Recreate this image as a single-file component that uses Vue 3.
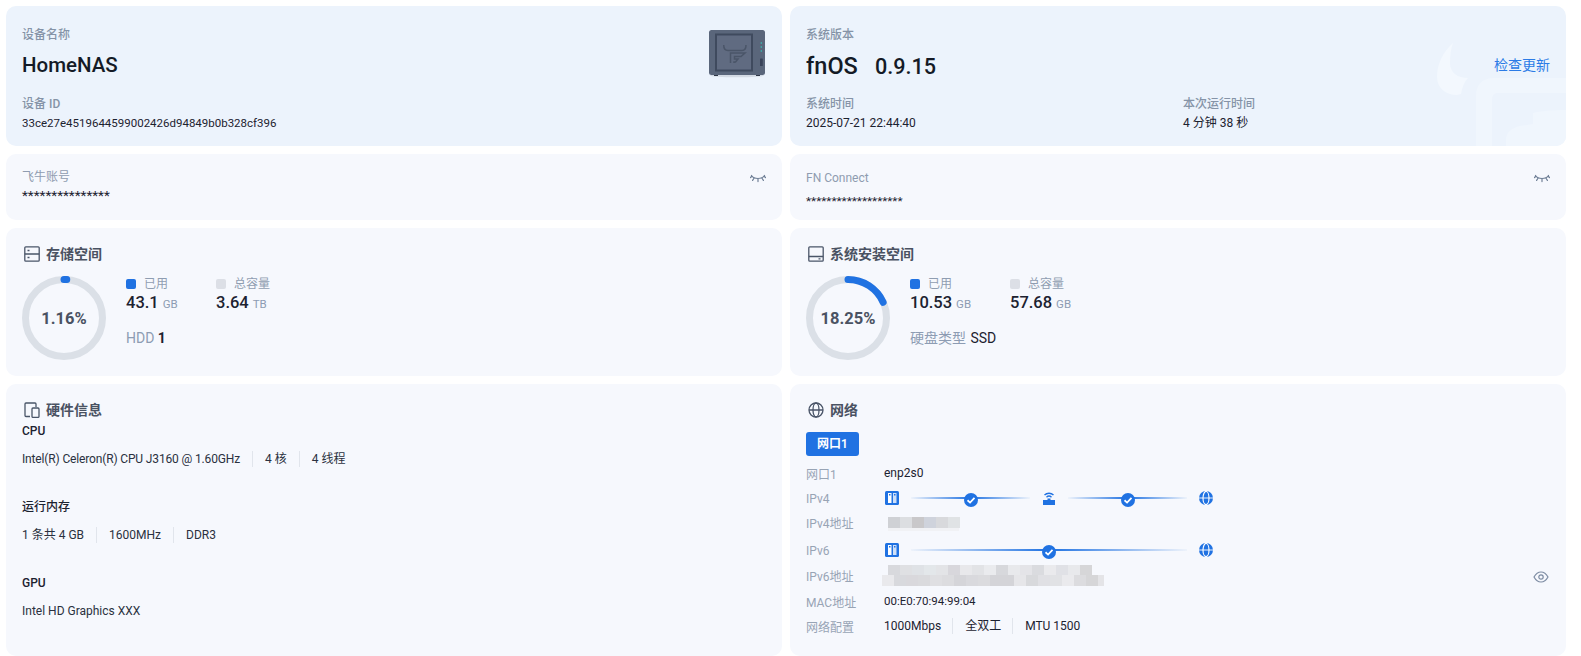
<script setup>
const ringC = 2 * Math.PI * 38.5
const dash = (p) => `${(ringC * p) / 100} ${ringC}`
const v4Blocks = ['#cfd1d5', '#dcdee1', '#c9c8ca', '#cfd3dc', '#d8d9dc', '#e0e3e5']
const v6Top = ['#d8d9dd', '#dfe0e3', '#dfe2e6', '#e3e7ea', '#e3e4e7', '#d8d7dc', '#e8e8eb', '#e2e3e6', '#eaebee', '#d7d8dc', '#e8e9ec', '#e4e4e8', '#dadbdf', '#eaeaed', '#e0e1e6', '#e8e9ec', '#d6d6d8']
const v6Bottom = ['#e9e9ec', '#d8d9dd', '#d9d8dc', '#dadadd', '#dfdfe2', '#dcdcdf', '#d5d5d9', '#d9d9dd', '#dbdbde', '#d4d4d8', '#d4d4d8', '#e6e6e9', '#d8d9dc', '#e0e0e4', '#e1e2e5', '#eaeaed', '#dcdcdf', '#d6d6d8', '#e4e4e7']
</script>

<template>
  <main class="page">
    <section class="card hero">
      <div class="hero-text">
        <div class="label">设备名称</div>
        <div class="big device">HomeNAS</div>
        <div class="label mt">设备 ID</div>
        <div class="val hash">33ce27e4519644599002426d94849b0b328cf396</div>
      </div>
      <svg class="nas" viewBox="0 0 60 50">
        <ellipse cx="30" cy="46.500" rx="27" ry="1.800" fill="#d3dae4" />
        <rect x="7" y="44" width="4" height="3" fill="#2f3747" />
        <rect x="49" y="44" width="4" height="3" fill="#2f3747" />
        <rect x="2" y="1" width="56" height="45" rx="2.500" fill="#5a667b" />
        <rect x="8" y="4.500" width="38" height="38" fill="#3f4a5e" />
        <rect x="10" y="6.500" width="34" height="34" fill="#606b81" />
        <path d="M16.700 16c0 4 1.500 5.500 4.300 5.500H35c2.500 0 4-1.500 4-5.500" fill="none" stroke="#4a5568" stroke-width="1.500" />
        <path d="M23.500 34V24H38L34 27.500H27.500V30H31L28.500 33H27V34" fill="none" stroke="#4a5568" stroke-width="1.500" />
        <circle cx="54.300" cy="14" r=".8" fill="#35c7bd" />
        <circle cx="54.300" cy="18" r=".8" fill="#35c7bd" />
        <circle cx="54.300" cy="22" r=".8" fill="#35c7bd" />
        <rect x="53" y="29.500" width="2.800" height="7.500" rx=".6" fill="#39435a" />
      </svg>
    </section>

    <section class="card hero sys">
      <svg class="watermark" viewBox="0 0 130 106">
        <path d="M17 3C7 12 1 24 1 37c0 11 9 18 20 18l4-1c1-6 3-12 7-16-10 0-18-5-18-15 0-8 1-15 3-20z" fill="#f3f8fe" />
        <path d="M40 106V56c0-12 7-18 18-18h72v15H62c-4 0-6 2-6 7v46z" fill="#f0f6fd" />
        <path d="M70 106v-6c0-8 6-12 14-14l13-2V73c8-2 18-3 33-3v36z" fill="#f0f6fd" />
      </svg>
      <div class="hero-text grow">
        <div class="label">系统版本</div>
        <div class="big-row">
          <div class="big"><span class="fnos">fnOS</span>0.9.15</div>
          <a class="link">检查更新</a>
        </div>
        <div class="two-col">
          <div>
            <div class="label">系统时间</div>
            <div class="val">2025-07-21 22:44:40</div>
          </div>
          <div>
            <div class="label">本次运行时间</div>
            <div class="val">4 分钟 38 秒</div>
          </div>
        </div>
      </div>
    </section>

    <section class="card account">
      <div>
        <div class="label light first">飞牛账号</div>
        <div class="stars wide">***************</div>
      </div>
      <svg class="eye-off" viewBox="0 0 16 12" fill="none" stroke="#6f7f96" stroke-width="1.200" stroke-linecap="round">
        <path d="M1.500 3.500C4 7.500 12 7.500 14.500 3.500" />
        <path d="M4 6.200L2.600 8.400M8 7.200V9.600M12 6.200l1.400 2.200M1.500 4.500L.6 5.500M14.500 4.500l.9 1" />
      </svg>
    </section>

    <section class="card account">
      <div>
        <div class="label light connect">FN Connect</div>
        <div class="stars narrow">*******************</div>
      </div>
      <svg class="eye-off" viewBox="0 0 16 12" fill="none" stroke="#6f7f96" stroke-width="1.200" stroke-linecap="round">
        <path d="M1.500 3.500C4 7.500 12 7.500 14.500 3.500" />
        <path d="M4 6.200L2.600 8.400M8 7.200V9.600M12 6.200l1.400 2.200M1.500 4.500L.6 5.500M14.500 4.500l.9 1" />
      </svg>
    </section>

    <section class="card storage">
      <h2 class="title">
        <svg class="ticon" viewBox="0 0 16 16" fill="none" stroke="#4a5568" stroke-width="1.300">
          <rect x=".8" y=".8" width="14.400" height="14.400" rx="1" />
          <path d="M.8 8h14.400M3.500 4.500h2M3.500 11.500h2" />
        </svg>
        存储空间
      </h2>
      <div class="store-body">
        <div class="ring">
          <svg viewBox="0 0 84 84">
            <circle cx="42" cy="42" r="38.500" class="ring-bg" />
            <circle cx="42" cy="42" r="38.500" class="ring-fg" :stroke-dasharray="dash(1.16)" />
          </svg>
          <span class="ring-num">1.16%</span>
        </div>
        <div class="stats">
          <div class="stat-row">
            <div class="stat w90">
              <div class="legend"><i class="dot blue"></i>已用</div>
              <div class="num">43.1<small>GB</small></div>
            </div>
            <div class="stat">
              <div class="legend"><i class="dot gray"></i>总容量</div>
              <div class="num">3.64<small>TB</small></div>
            </div>
          </div>
          <div class="disk"><span>HDD</span> <b>1</b></div>
        </div>
      </div>
    </section>

    <section class="card storage">
      <h2 class="title">
        <svg class="ticon" viewBox="0 0 16 16" fill="none" stroke="#4a5568" stroke-width="1.300">
          <rect x=".8" y=".8" width="14.400" height="14.400" rx="1" />
          <path d="M.8 10.500h14.400M10.500 12.900h2" />
        </svg>
        系统安装空间
      </h2>
      <div class="store-body">
        <div class="ring">
          <svg viewBox="0 0 84 84">
            <circle cx="42" cy="42" r="38.500" class="ring-bg" />
            <circle cx="42" cy="42" r="38.500" class="ring-fg" :stroke-dasharray="dash(18.25)" />
          </svg>
          <span class="ring-num">18.25%</span>
        </div>
        <div class="stats">
          <div class="stat-row">
            <div class="stat w100">
              <div class="legend"><i class="dot blue"></i>已用</div>
              <div class="num">10.53<small>GB</small></div>
            </div>
            <div class="stat">
              <div class="legend"><i class="dot gray"></i>总容量</div>
              <div class="num">57.68<small>GB</small></div>
            </div>
          </div>
          <div class="disk"><span>硬盘类型</span> <b class="ssd">SSD</b></div>
        </div>
      </div>
    </section>

    <section class="card hw">
      <h2 class="title">
        <svg class="ticon" viewBox="0 0 16 16" fill="none" stroke="#4a5568" stroke-width="1.300">
          <path d="M6 14.500H2a1 1 0 0 1-1-1V2a1 1 0 0 1 1-1h9a1 1 0 0 1 1 1v3" />
          <rect x="8" y="6" width="7" height="9.400" rx="1" />
        </svg>
        硬件信息
      </h2>
      <div class="hw-group">
        <h3>CPU</h3>
        <div class="inline">
          <span class="cpu-name">Intel(R) Celeron(R) CPU J3160 @ 1.60GHz</span><span>4 核</span><span>4 线程</span>
        </div>
      </div>
      <div class="hw-group">
        <h3>运行内存</h3>
        <div class="inline">
          <span>1 条共 4 GB</span><span>1600MHz</span><span>DDR3</span>
        </div>
      </div>
      <div class="hw-group">
        <h3>GPU</h3>
        <div class="inline"><span>Intel HD Graphics XXX</span></div>
      </div>
    </section>

    <section class="card net">
      <h2 class="title">
        <svg class="ticon" viewBox="0 0 16 16" fill="none" stroke="#4a5568" stroke-width="1.300">
          <circle cx="8" cy="8" r="7" />
          <ellipse cx="8" cy="8" rx="3" ry="7" />
          <path d="M1 8h14" />
        </svg>
        网络
      </h2>
      <button class="tab">网口1</button>
      <div class="grid">
        <div class="k">网口1</div>
        <div class="v">enp2s0</div>

        <div class="k shift">IPv4</div>
        <div class="v path shift">
          <svg class="nicon" viewBox="0 0 14 14"><rect width="14" height="14" rx="1.500" fill="#2072e2" /><rect x="3" y="2" width="3.500" height="10" fill="#fff" /><rect x="8" y="2" width="3.500" height="10" fill="#cfe0f8" /><rect x="4" y="3" width="1.500" height="1.500" fill="#2072e2" /><rect x="9" y="3" width="1.500" height="1.500" fill="#2072e2" /></svg>
          <span class="line"><i class="check"><svg viewBox="0 0 12 12"><path d="M3 6.200l2.200 2L9 4.200" /></svg></i></span>
          <svg class="nicon" viewBox="0 0 14 14" fill="none"><path d="M2.500 4a6.500 6.500 0 0 1 9 0M4.500 6.200a3.600 3.600 0 0 1 5 0" stroke="#2072e2" stroke-width="1.400" /><path d="M5.500 7.500h3V9h4.500v5H1V9h4.500z" fill="#2072e2" /></svg>
          <span class="line"><i class="check"><svg viewBox="0 0 12 12"><path d="M3 6.200l2.200 2L9 4.200" /></svg></i></span>
          <svg class="nicon" viewBox="0 0 14 14"><circle cx="7" cy="7" r="7" fill="#2072e2" /><ellipse cx="7" cy="7" rx="3" ry="6.500" fill="none" stroke="#fff" stroke-width="1.200" /><path d="M0 7h14" stroke="#fff" stroke-width=".9" /></svg>
        </div>

        <div class="k">IPv4地址</div>
        <div class="v">
          <span class="blur b4">
            <span class="blur-row"><i v-for="c in v4Blocks" :key="c" :style="{ background: c }"></i></span>
          </span>
        </div>

        <div class="k shift">IPv6</div>
        <div class="v path shift">
          <svg class="nicon" viewBox="0 0 14 14"><rect width="14" height="14" rx="1.500" fill="#2072e2" /><rect x="3" y="2" width="3.500" height="10" fill="#fff" /><rect x="8" y="2" width="3.500" height="10" fill="#cfe0f8" /><rect x="4" y="3" width="1.500" height="1.500" fill="#2072e2" /><rect x="9" y="3" width="1.500" height="1.500" fill="#2072e2" /></svg>
          <span class="line"><i class="check"><svg viewBox="0 0 12 12"><path d="M3 6.200l2.200 2L9 4.200" /></svg></i></span>
          <svg class="nicon" viewBox="0 0 14 14"><circle cx="7" cy="7" r="7" fill="#2072e2" /><ellipse cx="7" cy="7" rx="3" ry="6.500" fill="none" stroke="#fff" stroke-width="1.200" /><path d="M0 7h14" stroke="#fff" stroke-width=".9" /></svg>
        </div>

        <div class="k">IPv6地址</div>
        <div class="v v6">
          <span class="blur b6">
            <span class="blur-row top"><i v-for="(c, i) in v6Top" :key="i" :style="{ background: c }"></i></span>
            <span class="blur-row"><i v-for="(c, i) in v6Bottom" :key="i" :style="{ background: c }"></i></span>
          </span>
          <svg class="eye" viewBox="0 0 16 16" fill="none" stroke="#7d8ca3" stroke-width="1.200">
            <path d="M1 8c2-3.600 4.400-5 7-5s5 1.400 7 5c-2 3.600-4.400 5-7 5s-5-1.400-7-5z" />
            <circle cx="8" cy="8" r="2.200" />
          </svg>
        </div>

        <div class="k">MAC地址</div>
        <div class="v tight">00:E0:70:94:99:04</div>

        <div class="k nudge">网络配置</div>
        <div class="v inline nudge"><span>1000Mbps</span><span>全双工</span><span>MTU 1500</span></div>
      </div>
    </section>
  </main>
</template>

<style scoped>
.page {
  display: grid;
  grid-template-columns: 776px 776px;
  grid-template-rows: 140px 66px 148px 272px;
  gap: 8px;
  padding: 6px 0 0 6px;
  box-sizing: border-box;
  width: 1581px;
  height: 656px;
  background: #fff;
  font-family: Roboto, "Noto Sans CJK SC", "Liberation Sans", sans-serif;
  color: #1c2230;
  overflow: hidden;
}
.card {
  background: #f6f8fd;
  border-radius: 10px;
  padding: 0 16px;
  position: relative;
  overflow: hidden;
  min-width: 0;
}
.hero {
  background: #ecf3fc;
  display: flex;
  justify-content: space-between;
  padding-top: 22px;
}
.sys { display: block; }
.watermark {
  position: absolute;
  right: 0;
  bottom: 0;
  width: 130px;
  height: 106px;
}
.hero-text { position: relative; }
.grow { width: 100%; }
.label {
  font-size: 12px;
  line-height: 14px;
  color: #8593a7;
  font-weight: 500;
}
.label.light { font-weight: 400; color: #8f9cb0; }
.mt { margin-top: 18px; }
.big {
  font-size: 21.600px;
  line-height: 28px;
  font-weight: 500;
  margin-top: 10px;
  color: #141a26;
}
.device { font-size: 20.500px; margin-top: 9px; }
.fnos {
  display: inline-block;
  width: 69px;
  font-size: 23.500px;
}
.big-row {
  display: flex;
  justify-content: space-between;
  align-items: center;
}
.link {
  color: #2b7be6;
  font-size: 14px;
  margin: 4px 0 0 0;
}
.val {
  font-size: 12px;
  line-height: 16px;
  margin-top: 4px;
}
.hash { font-size: 11.500px; }
.two-col {
  display: grid;
  grid-template-columns: 377px 1fr;
  margin-top: 16px;
}
.nas {
  width: 60px;
  height: 50px;
  margin: 1px -1px 0 0;
}
.account {
  display: flex;
  justify-content: space-between;
  padding-top: 15px;
}
.stars { line-height: 16px; }
.stars.wide { font-size: 13.600px; margin-top: 3px; }
.stars.narrow { font-size: 11.800px; margin-top: 8px; }
.first { margin-top: 1px; }
.connect { margin-top: 2px; }
.eye-off { width: 16px; height: 12px; margin-top: 3px; }
.title {
  display: flex;
  align-items: center;
  gap: 6px;
  margin: 0 0 0 2px;
  font-size: 14px;
  line-height: 18px;
  font-weight: 600;
  color: #4a5262;
}
.ticon { width: 16px; height: 16px; flex: none; }
.storage { padding-top: 17px; }
.store-body {
  display: flex;
  gap: 20px;
  margin-top: 13px;
}
.ring {
  width: 84px;
  height: 84px;
  position: relative;
  display: flex;
  align-items: center;
  justify-content: center;
  flex: none;
}
.ring svg {
  position: absolute;
  inset: 0;
  width: 100%;
  height: 100%;
  transform: rotate(-90deg);
}
.ring-bg { fill: none; stroke: #dbe0e7; stroke-width: 7; }
.ring-fg {
  fill: none;
  stroke: #2072e2;
  stroke-width: 7;
  stroke-linecap: round;
}
.ring-num {
  font-size: 16.500px;
  font-weight: 700;
  color: #4a5262;
  position: relative;
}
.stats { margin-top: 1px; }
.stat-row { display: flex; }
.w90 { width: 90px; }
.w100 { width: 100px; }
.legend {
  display: flex;
  align-items: center;
  font-size: 12px;
  line-height: 14px;
  color: #8f9db1;
}
.dot {
  width: 10px;
  height: 10px;
  border-radius: 2px;
  margin-right: 8px;
}
.dot.blue { background: #2072e2; }
.dot.gray { background: #dcdfe6; }
.num {
  font-size: 16.500px;
  line-height: 22px;
  font-weight: 500;
  color: #1c2230;
  margin-top: 1px;
}
.num small {
  font-size: 11.500px;
  font-weight: 400;
  color: #8d9cb3;
  margin-left: 4px;
}
.disk {
  margin-top: 14px;
  font-size: 14px;
  line-height: 18px;
  color: #8d9cb3;
}
.disk b { color: #1c2230; font-weight: 700; }
.disk .ssd { font-weight: 400; margin-left: 1px; }
.hw { padding-top: 17px; }
.hw .title { margin-bottom: 4px; }
.hw-group { height: 76px; }
.hw-group h3 {
  margin: 0;
  font-size: 12px;
  line-height: 16px;
  font-weight: 500;
  color: #1c2230;
}
.inline {
  display: flex;
  align-items: center;
  font-size: 12px;
  line-height: 16px;
  color: #2a3140;
}
.hw-group .inline { margin-top: 12px; }
.cpu-name { letter-spacing: -0.15px; }
.inline span + span {
  margin-left: 12px;
  padding-left: 12px;
  border-left: 1px solid #e1e5ec;
}
.net { padding-top: 17px; }
.tab {
  display: block;
  width: 53px;
  height: 24px;
  margin-top: 13px;
  border: 0;
  border-radius: 3px;
  background: #2072e2;
  color: #fff;
  font: 600 12px/24px Roboto, "Noto Sans CJK SC", sans-serif;
  padding: 0;
}
.grid {
  display: grid;
  grid-template-columns: 78px 1fr;
  grid-template-rows: 24px 24px 26px 28px 24px 28px 20px;
  margin-top: 5px;
  align-items: center;
  font-size: 12px;
}
.k { color: #98a4b5; }
.v { color: #1c2230; min-width: 0; }
.tight { font-size: 11.500px; }
.shift { margin-top: 4px; }
.nudge { margin-top: 2px; }
.grid .inline span + span { margin-left: 11px; }
.path {
  display: flex;
  align-items: center;
  width: 328px;
  margin-left: 1px;
  padding-bottom: 2px;
}
.nicon { width: 14px; height: 14px; flex: none; }
.line {
  flex: 1;
  height: 2px;
  margin: 0 12px;
  position: relative;
  background: linear-gradient(90deg, #eef3fb, #2072e2 50%, #eef3fb);
}
.check {
  position: absolute;
  left: 50%;
  top: 50%;
  width: 14px;
  height: 14px;
  margin: -5px 0 0 -7px;
  border-radius: 50%;
  background: #2072e2;
  display: block;
}
.check svg { display: block; width: 14px; height: 14px; }
.check path { fill: none; stroke: #fff; stroke-width: 1.500; }
.blur { display: flex; flex-direction: column; }
.blur-row { display: flex; }
.blur-row i { width: 12px; height: 11px; display: block; flex: none; }
.b4 {
  margin: 4px 0 0 4px;
  padding-bottom: 3px;
  box-shadow: inset 0 -3px 0 #f1f2f5;
  width: 71px;
}
.b6 { width: 222px; margin-left: -2px; }
.b6 .blur-row.top { margin-left: 6px; }
.b6 .blur-row i { height: 10.500px; }
.b6 .blur-row { width: 222px; overflow: hidden; }
.v6 {
  display: flex;
  align-items: center;
  justify-content: space-between;
}
.eye { width: 16px; height: 16px; margin: 4px 1px 0 0; }
</style>
